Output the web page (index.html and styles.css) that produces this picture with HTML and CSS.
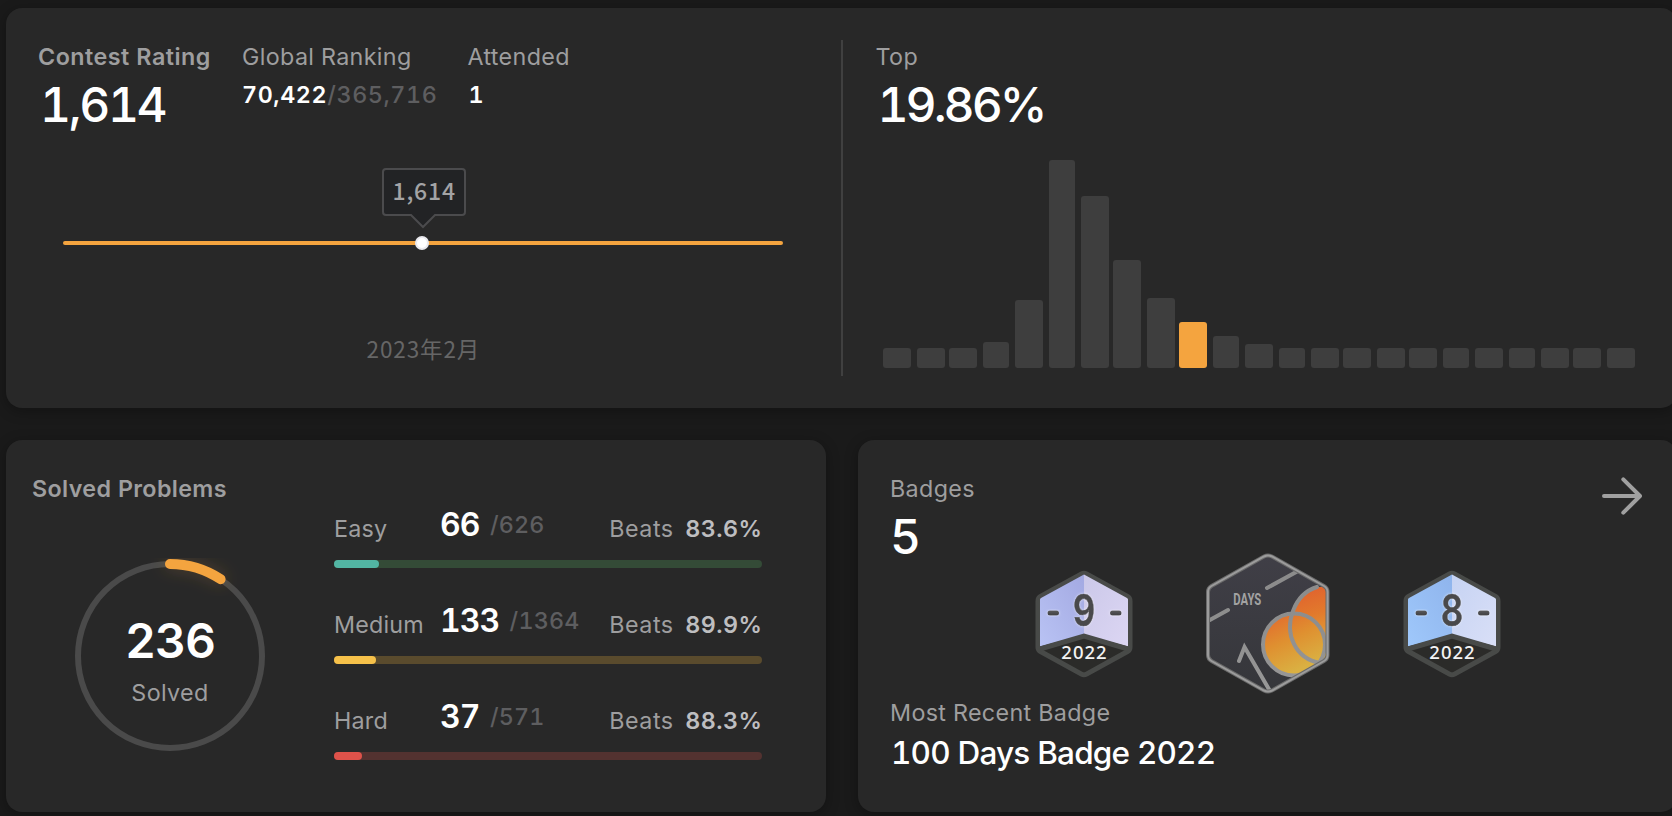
FILE: index.html
```html
<!DOCTYPE html>
<html lang="en">
<head>
<meta charset="utf-8">
<title>Profile</title>
<link rel="stylesheet" href="styles.css">
</head>
<body>
<main class="page">
  <section class="card contest">
    <div class="rating">
      <div class="stats">
        <div class="stat">
          <div class="label strong t-contest">Contest Rating</div>
          <div class="big t-rating">1,614</div>
        </div>
        <div class="stat">
          <div class="label t-global">Global Ranking</div>
          <div class="small"><span class="t-rank">70,422</span><span class="dim t-total">/365,716</span></div>
        </div>
        <div class="stat">
          <div class="label t-attended">Attended</div>
          <div class="small one">1</div>
        </div>
      </div>
      <svg class="rating-chart" width="835" height="236" viewBox="6 140 835 236">
        <path d="M65 243H781" stroke="#f4a43f" stroke-width="4" stroke-linecap="round"/>
        <path d="M386 169H462Q465 169 465 172V212Q465 215 462 215H435L423 227L411 215H386Q383 215 383 212V172Q383 169 386 169Z" fill="#222325" stroke="#4b4b4d" stroke-width="2"/>
        <circle cx="422" cy="243" r="6" fill="#fff" stroke="#e9e9ee" stroke-width="2"/>
        <text class="tip" x="392.500" y="200">1,614</text>
        <text class="month" x="366.500" y="358">2023年2月</text>
      </svg>
    </div>
    <div class="divider"></div>
    <div class="top">
      <div class="label t-top">Top</div>
      <div class="big t-percent">19.86%</div>
      <svg class="histogram" width="760" height="210" viewBox="880 158 760 210" fill="#3e3e3e">
        <rect x="883" y="348" width="28" height="20" rx="3"/>
        <rect x="917" y="348" width="28" height="20" rx="3"/>
        <rect x="949" y="348" width="28" height="20" rx="3"/>
        <rect x="983" y="342" width="26" height="26" rx="3"/>
        <rect x="1015" y="300" width="28" height="68" rx="3"/>
        <rect x="1049" y="160" width="26" height="208" rx="3"/>
        <rect x="1081" y="196" width="28" height="172" rx="3"/>
        <rect x="1113" y="260" width="28" height="108" rx="3"/>
        <rect x="1147" y="298" width="28" height="70" rx="3"/>
        <rect x="1179" y="322" width="28" height="46" rx="3" fill="#f4a43f"/>
        <rect x="1213" y="336" width="26" height="32" rx="3"/>
        <rect x="1245" y="344" width="28" height="24" rx="3"/>
        <rect x="1279" y="348" width="26" height="20" rx="3"/>
        <rect x="1311" y="348" width="28" height="20" rx="3"/>
        <rect x="1343" y="348" width="28" height="20" rx="3"/>
        <rect x="1377" y="348" width="28" height="20" rx="3"/>
        <rect x="1409" y="348" width="28" height="20" rx="3"/>
        <rect x="1443" y="348" width="26" height="20" rx="3"/>
        <rect x="1475" y="348" width="28" height="20" rx="3"/>
        <rect x="1509" y="348" width="26" height="20" rx="3"/>
        <rect x="1541" y="348" width="28" height="20" rx="3"/>
        <rect x="1573" y="348" width="28" height="20" rx="3"/>
        <rect x="1607" y="348" width="28" height="20" rx="3"/>
      </svg>
    </div>
  </section>

  <section class="card solved">
    <div class="solved-left">
      <div class="label strong t-solved">Solved Problems</div>
      <div class="ring">
        <svg class="ring-svg" width="200" height="200" viewBox="-100 -100 200 200">
          <defs><filter id="glow" x="-60%" y="-35%" width="220%" height="240%"><feGaussianBlur stdDeviation="8"/></filter></defs>
          <circle r="92" fill="none" stroke="#4a4a4a" stroke-width="6"/>
          <path d="M0 -92A92 92 0 0 1 50.6 -76.8" fill="none" stroke="#f4a43f" stroke-opacity=".22" stroke-width="10" stroke-linecap="round" filter="url(#glow)"/>
          <path d="M0 -92A92 92 0 0 1 50.6 -76.8" fill="none" stroke="#f4a43f" stroke-width="10" stroke-linecap="round"/>
        </svg>
        <div class="ring-text">
          <div class="big bold t-236">236</div>
          <div class="label t-ring">Solved</div>
        </div>
      </div>
    </div>
    <div class="levels">
      <div class="level easy">
        <div class="line"><span class="name">Easy</span><span class="count">66</span><span class="of">/626</span><span class="beats">Beats</span><span class="pct">83.6%</span></div>
        <div class="track"><div class="fill" style="width:45px"></div></div>
      </div>
      <div class="level medium">
        <div class="line"><span class="name">Medium</span><span class="count">133</span><span class="of">/1364</span><span class="beats">Beats</span><span class="pct">89.9%</span></div>
        <div class="track"><div class="fill" style="width:42px"></div></div>
      </div>
      <div class="level hard">
        <div class="line"><span class="name">Hard</span><span class="count">37</span><span class="of">/571</span><span class="beats">Beats</span><span class="pct">88.3%</span></div>
        <div class="track"><div class="fill" style="width:28px"></div></div>
      </div>
    </div>
  </section>

  <section class="card badges">
    <div class="badges-head">
      <div>
        <div class="label t-badges">Badges</div>
        <div class="big t-five">5</div>
      </div>
      <svg class="arrow" width="40" height="40" viewBox="1602 476 40 40" fill="none" stroke="#a0a0a0" stroke-width="4" stroke-linecap="round" stroke-linejoin="round"><path d="M1604 496H1639.5M1623.3 479.3L1640 496L1623.3 512.7"/></svg>
    </div>
    <div class="badge-row">
      <svg width="100" height="112" viewBox="14 18 100 112">
        <defs>
          <linearGradient id="p1" x1="1" y1="0" x2="0" y2="1"><stop offset="0" stop-color="#a3a9e2"/><stop offset="1" stop-color="#b9c3f4"/></linearGradient>
          <linearGradient id="p2" x1="0" y1="0" x2="1" y2="1"><stop offset="0" stop-color="#cbc8e9"/><stop offset="1" stop-color="#dcd6f3"/></linearGradient>
          <linearGradient id="b1" x1="1" y1="0" x2="0" y2="1"><stop offset="0" stop-color="#8fb4ec"/><stop offset="1" stop-color="#9fc8fb"/></linearGradient>
          <linearGradient id="b2" x1="0" y1="0" x2="1" y2="1"><stop offset="0" stop-color="#c6d3f3"/><stop offset="1" stop-color="#d9dff7"/></linearGradient>
          <linearGradient id="ink" x1="0" y1="0" x2="0" y2="1"><stop offset="0" stop-color="#5a5a5c"/><stop offset="1" stop-color="#404042"/></linearGradient>
          <filter id="halo" x="-30%" y="-30%" width="160%" height="160%"><feDropShadow dx="0" dy="0" stdDeviation="1.6" flood-color="#fff" flood-opacity=".6"/></filter>
        </defs>
        <path d="M61.5 23.9Q64 22.500 66.500 23.900L107.500 46.500Q110 48 110 51V97.500Q110 100 107.500 101.500L66.500 124.100Q64 125.500 61.500 124.100L20.500 101.500Q18 100 18 97.500V51Q18 48 20.500 46.500Z" fill="#2b2b29" stroke="#484a48" stroke-width="5" stroke-linejoin="round"/>
        <path d="M64 24.500V85L20 96.500V49.500Q20 48.500 21 48Z" fill="url(#p1)"/>
        <path d="M64 24.500V85L108 96.500V49.500Q108 48.500 107 48Z" fill="url(#p2)"/>
        <path d="M20 99L64 86L108 99" fill="none" stroke="#484a48" stroke-width="5"/>
        <g filter="url(#halo)" fill="url(#ink)"><rect x="27.500" y="60.500" width="11.500" height="5" rx="2.500"/><rect x="90" y="60.500" width="11.500" height="5" rx="2.500"/></g>
        <text class="badge-num" transform="translate(64 76) scale(.8 1)">9</text>
        <text class="badge-year" x="64.500" y="109">2022</text>
      </svg>
      <svg width="128" height="143" viewBox="14 12 128 143">
        <defs>
          <linearGradient id="sun" gradientUnits="userSpaceOnUse" x1="92" y1="74" x2="116" y2="126"><stop offset="0" stop-color="#e26f2e"/><stop offset=".45" stop-color="#df9030"/><stop offset="1" stop-color="#dab042"/></linearGradient>
          <linearGradient id="sun2" gradientUnits="userSpaceOnUse" x1="112" y1="52" x2="132" y2="112"><stop offset="0" stop-color="#e0642e"/><stop offset=".4" stop-color="#e27a2c"/><stop offset="1" stop-color="#dcaf3f"/></linearGradient>
          <linearGradient id="steel" gradientUnits="userSpaceOnUse" x1="0" y1="12" x2="0" y2="155"><stop offset="0" stop-color="#8a8a8a"/><stop offset=".5" stop-color="#8e8e8e"/><stop offset="1" stop-color="#999"/></linearGradient>
          <linearGradient id="slate" x1="0" y1="0" x2="0" y2="1"><stop offset="0" stop-color="#403f47"/><stop offset="1" stop-color="#35363a"/></linearGradient>
          <clipPath id="hex"><path d="M74 16.500Q78 14.500 82 16.500L134 46Q137.500 48 137.500 52V115Q137.500 119 134 121L82 150.500Q78 152.500 74 150.500L21.500 121Q18 119 18 115V52Q18 48 21.500 46Z"/></clipPath>
        </defs>
        <g clip-path="url(#hex)">
          <rect x="14" y="12" width="128" height="143" fill="url(#slate)"/>
          <path d="M127 47C104 54 94 84 104 104C110 116 119 121 130 123H142V47Z" fill="url(#sun2)"/>
          <circle cx="104" cy="104.500" r="30" fill="url(#sun)"/>
          <g fill="none" stroke="url(#steel)" stroke-width="4" stroke-linecap="round">
            <path d="M127 47C104 54 94 84 104 104C110 116 119 121 130 123"/>
            <circle cx="104" cy="104.500" r="31"/>
            <path d="M77 48L108 31M18 81L38 70M49 121L54.500 107L80 151"/>
          </g>
        </g>
        <path d="M74 16.500Q78 14.500 82 16.500L134 46Q137.500 48 137.500 52V115Q137.500 119 134 121L82 150.500Q78 152.500 74 150.500L21.500 121Q18 119 18 115V52Q18 48 21.500 46Z" fill="none" stroke="#6b6b6b" stroke-width="4"/>
        <path d="M74 16.500Q78 14.500 82 16.500L134 46Q137.500 48 137.500 52V115Q137.500 119 134 121L82 150.500Q78 152.500 74 150.500L21.500 121Q18 119 18 115V52Q18 48 21.500 46Z" fill="none" stroke="#9c9c9c" stroke-width="2"/>
        <text class="badge-days" x="43.300" y="65.300" textLength="28" lengthAdjust="spacingAndGlyphs">DAYS</text>
      </svg>
      <svg width="100" height="112" viewBox="14 18 100 112">
        <path d="M61.5 23.9Q64 22.500 66.500 23.900L107.500 46.500Q110 48 110 51V97.500Q110 100 107.500 101.500L66.500 124.100Q64 125.500 61.500 124.100L20.500 101.500Q18 100 18 97.500V51Q18 48 20.500 46.500Z" fill="#2b2b29" stroke="#484a48" stroke-width="5" stroke-linejoin="round"/>
        <path d="M64 24.500V85L20 96.500V49.500Q20 48.500 21 48Z" fill="url(#b1)"/>
        <path d="M64 24.500V85L108 96.500V49.500Q108 48.500 107 48Z" fill="url(#b2)"/>
        <path d="M20 99L64 86L108 99" fill="none" stroke="#484a48" stroke-width="5"/>
        <g filter="url(#halo)" fill="url(#ink)"><rect x="27.500" y="60.500" width="11.500" height="5" rx="2.500"/><rect x="90" y="60.500" width="11.500" height="5" rx="2.500"/></g>
        <text class="badge-num" transform="translate(64 76) scale(.8 1)">8</text>
        <text class="badge-year" x="64.500" y="109">2022</text>
      </svg>
    </div>
    <div class="label t-recent">Most Recent Badge</div>
    <div class="badge-name">100 Days Badge 2022</div>
  </section>
</main>
</body>
</html>
```

FILE: styles.css
```css
* { box-sizing: border-box; }
html, body { height: 816px; overflow: hidden; }
body {
  margin: 0;
  background: #1a1a1a;
  font-family: Inter, "Liberation Sans", sans-serif;
  font-variant-numeric: tabular-nums;
  color: #fff;
}
svg { display: block; }
.page {
  display: grid;
  grid-template-columns: 820px 819px;
  grid-template-rows: 400px 372px;
  gap: 32px;
  padding: 8px 0 0 6px;
  width: 1677px;
}
.card {
  background: #282828;
  border-radius: 16px;
  box-shadow: 0 3px 14px rgba(0, 0, 0, .3);
}
.label {
  font-size: 23.3px;
  line-height: 28px;
  color: #9e9e9f;
  white-space: nowrap;
  letter-spacing: .35px;
}
.strong { font-weight: 600; }
.big { font-size: 48px; line-height: 48px; font-weight: 500; white-space: nowrap; }
.bold { font-weight: 600; }
.small { font-size: 23.3px; line-height: 28px; font-weight: 600; margin-top: 10px; white-space: nowrap; }
.dim { color: #5e5e60; font-weight: 500; }

.contest { grid-column: 1 / 3; display: flex; }
.rating { width: 835px; padding-top: 34.5px; }
.stats { display: grid; grid-template-columns: 204px 225.500px auto; padding-left: 32px; height: 97.5px; }
.stat .big { margin-top: 10px; }
.t-contest { letter-spacing: .46px; }
.t-rating { padding-left: 2px; letter-spacing: -2.4px; }
.t-rank { letter-spacing: .6px; }
.t-total { letter-spacing: .6px; }
.one { padding-left: 1px; }
.divider { width: 2px; margin: 32px 0; background: #404040; }
.top { padding: 34.5px 0 0 32.5px; }
.top .big { margin-top: 10px; padding-left: 2px; letter-spacing: -3px; }
.histogram { margin: 29.5px 0 0 4.5px; }
.tip, .month { font-family: "Noto Sans CJK JP", sans-serif; font-size: 23px; }
.tip { fill: #a3a3a5; font-weight: 500; letter-spacing: .8px; }
.month { fill: #666; font-size: 22.5px; letter-spacing: .9px; }

.solved { display: flex; }
.solved-left { width: 328px; padding: 34.5px 0 0 26px; }
.ring { position: relative; width: 200px; height: 200px; margin: 53.500px 0 0 38px; }
.ring-text { position: absolute; inset: 60.5px 0 0; text-align: center; }
.ring-text .label { margin-top: 14px; }
.t-236 { letter-spacing: -1px; }
.levels { padding-top: 60px; width: 428px; }
.level { height: 96px; padding-top: 15px; }
.line { display: flex; align-items: flex-start; height: 45px; font-size: 23.3px; line-height: 28px; white-space: nowrap; }
.name { width: 106px; color: #9e9e9f; letter-spacing: .2px; }
.count { font-size: 32px; line-height: 28px; font-weight: 600; margin-top: -4px; letter-spacing: -1px; }
.of { margin: -4px 0 0 10.5px; color: #5e5e60; font-weight: 500; letter-spacing: .2px; }
.beats { margin-left: auto; color: #9e9e9f; letter-spacing: .5px; }
.pct { margin-left: 11.5px; margin-right: -.5px; color: #bebec0; font-weight: 600; letter-spacing: .5px; }
.track { height: 8px; border-radius: 4px; }
.fill { height: 8px; border-radius: 4px; }
.easy .track { background: #344b37; }
.easy .fill { background: #52b5a3; }
.medium .track { background: #5a4b2d; }
.medium .fill { background: #f6c14a; }
.hard .track { background: #533230; }
.hard .fill { background: #de524a; }

.badges { padding: 34.5px 37px 0 32px; }
.badges-head { display: flex; justify-content: space-between; height: 77.5px; }
.badges-head .big { margin-top: 10px; }
.arrow { margin-top: 1.5px; margin-right: -2px; }
.badge-row { display: flex; align-items: center; justify-content: center; gap: 70px; height: 143px; padding-left: 6px; }
.t-recent { margin-top: 3.5px; }
.badge-name { font-size: 31.5px; line-height: 38px; font-weight: 500; margin-top: 7px; padding-left: 1px; white-space: nowrap; letter-spacing: -.8px; }
.badge-num { font: 600 44px Inter, sans-serif; text-anchor: middle; fill: #4a4a4c; stroke: #4a4a4c; stroke-width: .6; filter: url(#halo); }
.badge-year { font: 500 18.500px "Noto Sans", sans-serif; text-anchor: middle; fill: #f4f4f4; letter-spacing: 1px; }
.badge-days { font: 700 17px Roboto, sans-serif; fill: #a2a2a2; }
```
